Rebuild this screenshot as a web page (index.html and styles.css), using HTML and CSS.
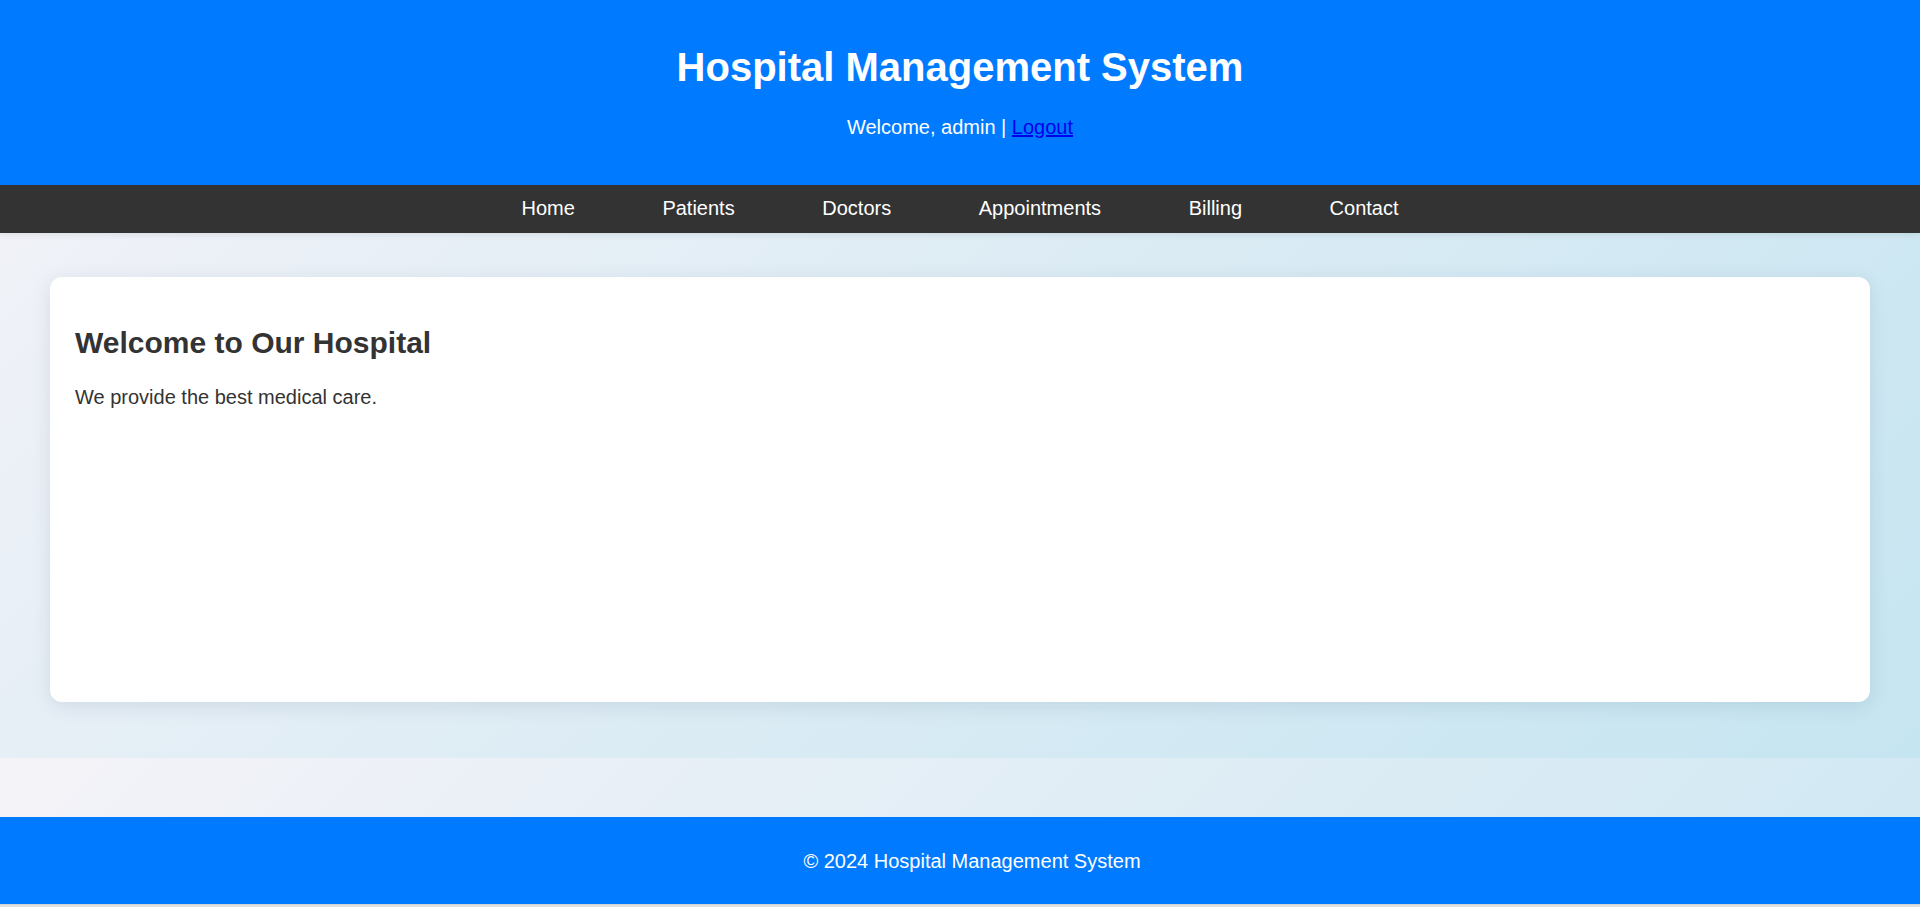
FILE: index.html
```html
<!DOCTYPE html>
<html lang="en">
<head>
<meta charset="utf-8">
<title>Hospital Management System</title>
<link rel="stylesheet" href="styles.css">
</head>
<body>
<header class="site-header">
  <h1 class="site-title">Hospital Management System</h1>
  <p class="user-line">Welcome, admin | <a href="#" class="logout">Logout</a></p>
</header>
<nav class="main-nav">
  <a href="#" class="nav-link">Home</a>
  <a href="#" class="nav-link">Patients</a>
  <a href="#" class="nav-link">Doctors</a>
  <a href="#" class="nav-link">Appointments</a>
  <a href="#" class="nav-link">Billing</a>
  <a href="#" class="nav-link">Contact</a>
</nav>
<main class="content">
  <section class="card">
    <h2 class="card-title">Welcome to Our Hospital</h2>
    <p class="card-text">We provide the best medical care.</p>
  </section>
</main>
<div class="spacer"></div>
<footer class="site-footer">
  <p class="footer-text">&copy; 2024 Hospital Management System</p>
</footer>
<div class="page-end"></div>
</body>
</html>
```

FILE: styles.css
```css
html {
  margin: 0;
  padding: 0;
}

body {
  margin: 0;
  font-family: "Liberation Sans", Arial, sans-serif;
  font-size: 20px;
  line-height: normal;
  color: #333;
  background-image: linear-gradient(135deg, #f4f3f8 0%, #c5e5f1 100%);
  background-size: 100% 758px;
  background-repeat: repeat-y;
}

.site-header {
  background: #007bff;
  color: #fff;
  text-align: center;
  padding: 44px 0 26px;
}

.site-title {
  margin: 0 0 26px;
  font-size: 40px;
  font-weight: bold;
  line-height: 46px;
}

.user-line {
  margin: 0 0 20px;
  font-size: 20px;
  line-height: 23px;
}

.logout {
  color: #0000ee;
  text-decoration: underline;
}

.main-nav {
  background: #333;
  display: flex;
  justify-content: center;
  gap: 87.6px;
  padding: 12px 0 13px;
  box-shadow: 0 2px 6px rgba(0, 0, 0, 0.08);
  position: relative;
}

.nav-link {
  color: #fff;
  text-decoration: none;
  font-size: 20px;
  line-height: 23px;
}

.content {
  padding: 44px 50px 56px;
}

.card {
  background: #fff;
  border-radius: 12px;
  padding: 25px;
  min-height: 375px;
  box-shadow: 0 4px 20px rgba(0, 40, 80, 0.1);
}

.card-title {
  margin: 24px 0 26px;
  font-size: 30px;
  font-weight: bold;
  line-height: 34px;
  color: #333;
}

.card-text {
  margin: 0;
  font-size: 20px;
  line-height: 23px;
  color: #333;
}

.spacer {
  height: 59px;
}

.site-footer {
  background: #007bff;
  color: #fff;
  text-align: center;
  padding: 33px 0 31px 24px;
}

.footer-text {
  margin: 0;
  font-size: 20px;
  line-height: 23px;
}

.page-end {
  height: 20px;
  background: #e0e0e0;
  border-top: 1px solid #d4d4d4;
}
```
